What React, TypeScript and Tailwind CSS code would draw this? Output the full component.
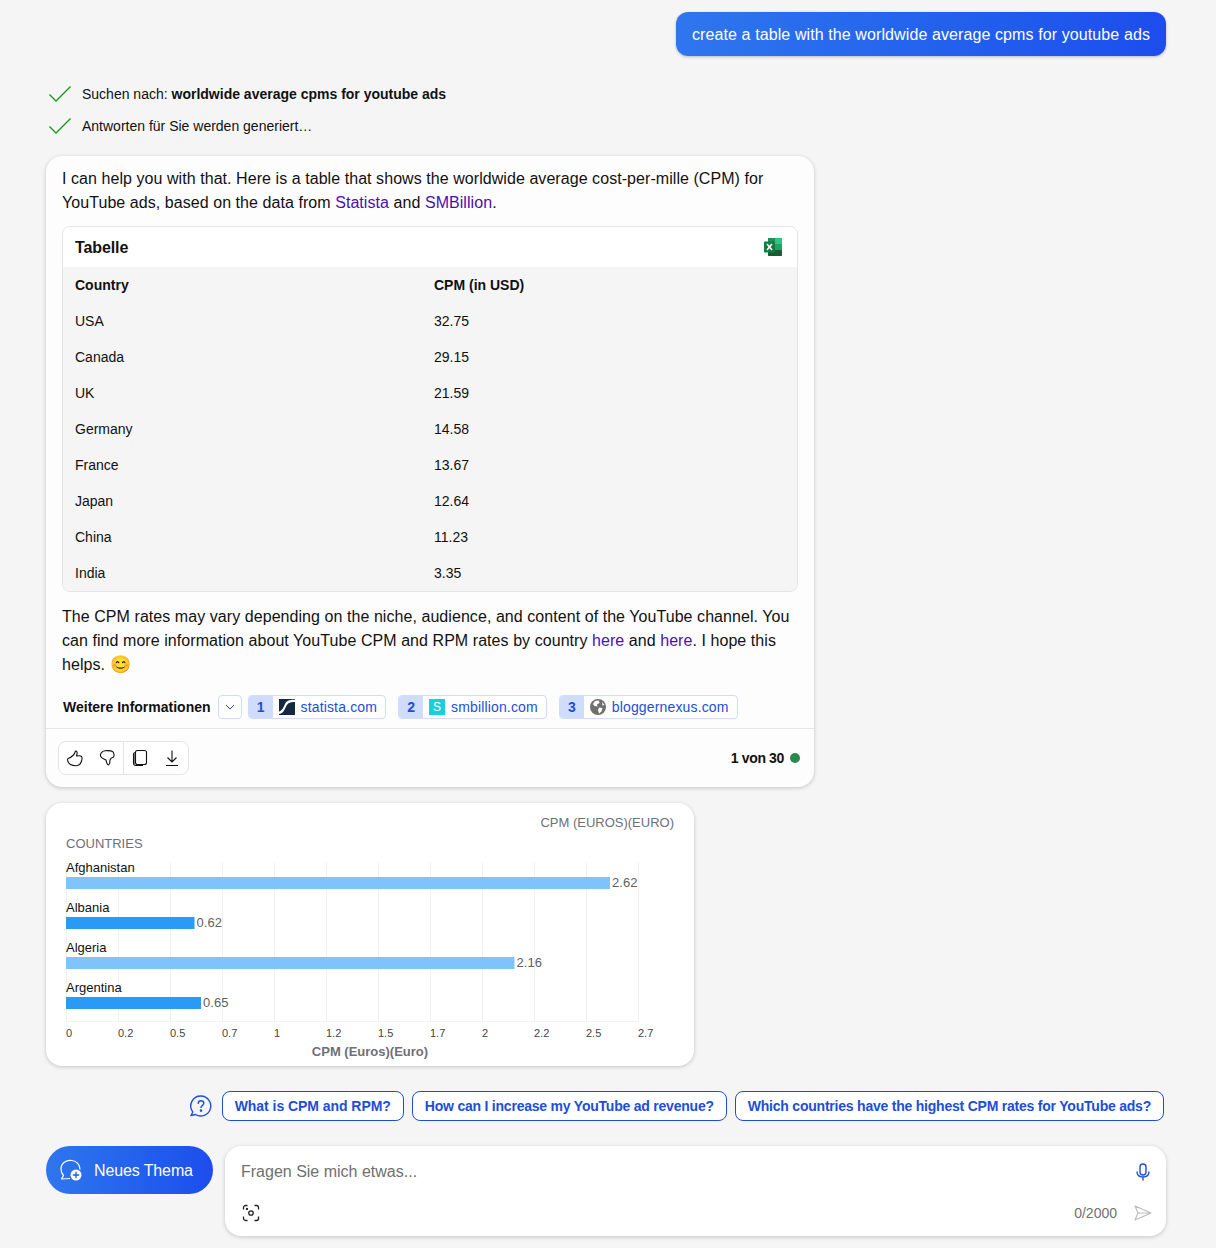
const rows = [
  ["USA", "32.75"],
  ["Canada", "29.15"],
  ["UK", "21.59"],
  ["Germany", "14.58"],
  ["France", "13.67"],
  ["Japan", "12.64"],
  ["China", "11.23"],
  ["India", "3.35"],
];

const Check = () => (
  <svg width="24" height="18" viewBox="0 0 24 18" fill="none" className="shrink-0">
    <path d="M1.5 9.5 L8 16 L22.5 1.5" stroke="#119c11" strokeWidth="1.3" />
  </svg>
);

const Excel = () => (
  <svg width="18" height="18" viewBox="0 0 18 18">
    <rect x="4" y="0" width="14" height="18" rx="1" fill="#21a366" />
    <rect x="4" y="0" width="7" height="6" fill="#1f8f5a" />
    <rect x="11" y="0" width="7" height="6" fill="#33c481" />
    <rect x="4" y="6" width="7" height="6" fill="#107c41" />
    <rect x="11" y="6" width="7" height="6" fill="#21a366" />
    <rect x="4" y="12" width="14" height="6" rx="1" fill="#185c37" />
    <rect x="0" y="3.5" width="11" height="11" rx="1" fill="#107c41" />
    <path d="M3 6 L8 12 M8 6 L3 12" stroke="#fff" strokeWidth="1.6" />
  </svg>
);

const SourceChip = ({ n, icon, label }: { n: string; icon: React.ReactNode; label: string }) => (
  <div className="flex h-6 items-center rounded border border-[#cfdcfb] bg-white text-sm text-[#1d4ed8]">
    <span className="flex h-full w-6 items-center justify-center rounded-l-[3px] bg-[#d0dcfb] font-bold">{n}</span>
    <span className="ml-1.5 mr-1.5 flex size-4 items-center justify-center">{icon}</span>
    <span className="pr-2 tracking-[0.15px]">{label}</span>
  </div>
);

const Statista = () => (
  <svg width="16" height="16" viewBox="0 0 16 16">
    <rect width="16" height="16" fill="#15283f" />
    <path d="M0 15 C6 15 6 6 10 4 C12 3 14 3 16 3 L16 0.8 C12 0.8 8 1 6 5 C4.5 8.5 3 12 0 12.5 Z" fill="#fff" />
  </svg>
);

const Globe = () => (
  <svg width="16" height="16" viewBox="0 0 16 16">
    <circle cx="8" cy="8" r="8" fill="#6f6f6f" />
    <path d="M5 2 L9 1.5 L9.5 4 L7 5.5 L7.5 7.5 L4.5 7 L3 5 Z M9 8.5 L12.5 9 L11.5 12.5 L9 14.5 L8 11 Z M12 3 L14.5 6 L12.5 6.5 Z" fill="#fff" />
  </svg>
);

const bars = [
  { name: "Afghanistan", y: 74, w: 544, v: "2.62", c: "#7fc4fd" },
  { name: "Albania", y: 114, w: 128.5, v: "0.62", c: "#2a9af7" },
  { name: "Algeria", y: 154, w: 448.5, v: "2.16", c: "#7fc4fd" },
  { name: "Argentina", y: 194, w: 135, v: "0.65", c: "#2a9af7" },
];
const ticks = ["0", "0.2", "0.5", "0.7", "1", "1.2", "1.5", "1.7", "2", "2.2", "2.5", "2.7"];

const Chart = () => (
  <svg viewBox="0 0 648 263" width="648" height="263" className="block" fontFamily="'Liberation Sans', Arial, sans-serif">
    <text x="628" y="24" textAnchor="end" fontSize="13" fill="#6e7079">CPM (EUROS)(EURO)</text>
    <text x="20" y="45" fontSize="13" fill="#6e7079">COUNTRIES</text>
    {ticks.map((t, i) => (
      <line key={t} x1={20.5 + i * 52} x2={20.5 + i * 52} y1="60" y2="219" stroke="#f0f0f0" />
    ))}
    <line x1="20" x2="592" y1="218.5" y2="218.5" stroke="#f3f3f3" />
    {bars.map((b) => (
      <g key={b.name}>
        <text x="20" y={b.y - 5} fontSize="13" fill="#111">{b.name}</text>
        <rect x="20" y={b.y} width={b.w} height="12" fill={b.c} />
        <text x={20 + b.w + 2} y={b.y + 10} fontSize="13" fill="#5f5f5f" letterSpacing="0.1">{b.v}</text>
      </g>
    ))}
    {ticks.map((t, i) => (
      <text key={t} x={20 + i * 52} y="234" fontSize="11" fill="#444">{t}</text>
    ))}
    <text x="324" y="253" textAnchor="middle" fontSize="13" fontWeight="700" fill="#6e7079">CPM (Euros)(Euro)</text>
  </svg>
);

const chips = [
  { t: "What is CPM and RPM?", c: "tracking-[-0.05px]" },
  { t: "How can I increase my YouTube ad revenue?", c: "tracking-[-0.22px]" },
  { t: "Which countries have the highest CPM rates for YouTube ads?", c: "tracking-[-0.22px]" },
];

export default function App() {
  return (
    <div className="flex h-[1248px] w-[1216px] flex-col overflow-hidden bg-[#f5f5f5] pl-[46px] pr-[50px] pt-3 font-['Liberation_Sans',Arial,sans-serif] text-[#111]">
      <div className="flex justify-end">
        <div className="flex h-11 items-center rounded-xl bg-gradient-to-r from-[#2f76ee] to-[#1d4ded] px-4 pt-px text-base tracking-[0.1px] text-white shadow-[0_1px_3px_rgba(0,0,0,0.25)]">
          create a table with the worldwide average cpms for youtube ads
        </div>
      </div>

      <div className="mt-[22px] flex h-8 items-center gap-[10px] pl-[2px] text-sm">
        <Check />
        <span>
          Suchen nach: <b className="font-bold">worldwide average cpms for youtube ads</b>
        </span>
      </div>
      <div className="flex h-8 items-center gap-[10px] pl-[2px] text-sm">
        <Check />
        <span>Antworten für Sie werden generiert…</span>
      </div>

      <div className="mt-[14px] w-[768px] rounded-2xl bg-[#fdfdfd] shadow-[0_1px_4px_rgba(0,0,0,0.2)]">
        <div className="px-4 pt-[11px]">
          <p className="text-base leading-6 tracking-[0.06px]">
            I can help you with that. Here is a table that shows the worldwide average cost-per-mille (CPM) for YouTube ads, based on the data from <span className="text-[#4b0fb0]">Statista</span> and <span className="text-[#4b0fb0]">SMBillion</span>.
          </p>
          <div className="mt-[11px] overflow-hidden rounded-lg border border-[#e4e4e4]">
            <div className="flex h-10 items-center justify-between bg-white pl-3 pr-[15px]">
              <span className="pt-px text-base font-bold tracking-[-0.1px]">Tabelle</span>
              <Excel />
            </div>
            <div className="bg-[#f5f5f5] text-sm">
              <div className="grid h-9 grid-cols-[359px_1fr] items-center px-3 font-bold">
                <span>Country</span>
                <span>CPM (in USD)</span>
              </div>
              {rows.map(([c, v]) => (
                <div key={c} className="grid h-9 grid-cols-[359px_1fr] items-center px-3">
                  <span>{c}</span>
                  <span>{v}</span>
                </div>
              ))}
            </div>
          </div>
          <p className="mt-[13px] text-base leading-6 tracking-[0.06px]">
            The CPM rates may vary depending on the niche, audience, and content of the YouTube channel. You can find more information about YouTube CPM and RPM rates by country <span className="text-[#4b0fb0]">here</span> and <span className="text-[#4b0fb0]">here</span>. I hope this helps. <span className="text-[17px] leading-[0]">😊</span>
          </p>
        </div>
        <div className="mt-[18px] flex h-6 items-center pl-[17px]">
          <span className="text-sm font-bold">Weitere Informationen</span>
          <div className="ml-[7px] flex size-6 items-center justify-center rounded border border-[#cfdcfb] bg-white">
            <svg width="12" height="12" viewBox="0 0 12 12" fill="none"><path d="M2 4 L6 8 L10 4" stroke="#1d4ed8" strokeWidth="1" /></svg>
          </div>
          <div className="ml-[6px] flex items-center gap-3">
            <SourceChip n="1" icon={<Statista />} label="statista.com" />
            <SourceChip n="2" icon={<span className="flex size-4 items-center justify-center bg-[#19cfdc] text-xs text-white">S</span>} label="smbillion.com" />
            <SourceChip n="3" icon={<Globe />} label="bloggernexus.com" />
          </div>
        </div>
        <div className="mt-[9px] flex h-[59px] items-center justify-between border-t border-[#e4e6ea] pl-3 pr-[14px]">
          <div className="flex h-[34px] w-[131px] items-center rounded-lg border border-[#e4e4e4] bg-white">
            <div className="flex h-full w-[65px] items-center gap-[14px] border-r border-[#e4e4e4] pl-[7px]">
              <svg width="18" height="18" viewBox="0 0 18 18" fill="none" stroke="#111" strokeWidth="1.1" strokeLinejoin="round">
                <path d="M2 9.5 C3.5 9 5.5 8 7.5 6 C8.5 5 9 3.5 9.5 2 C11 2 11.5 3.5 11 5 L10.5 7 C12 6.8 14.5 6.5 15.5 7.5 C16.5 8.5 16 10.5 15.5 12 C15 14 14 16 11.5 16.5 C9 17 6.5 16.5 4.5 15.5 C2.5 14.5 0.8 11 2 9.5 Z" />
              </svg>
              <svg width="18" height="18" viewBox="0 0 18 18" fill="none" stroke="#111" strokeWidth="1.1" strokeLinejoin="round">
                <path d="M2.5 7 C2 4.5 4 2 7 1.7 C9.5 1.5 13 1.5 14.5 2.5 C16 3.5 16.5 6.5 15.5 8 C14 8.5 12.5 9.5 12 11 C11.5 13 12.5 15.5 10.5 16 C9 16 8.5 13 8 11 C6 10 3.5 9.5 2.5 7 Z" />
              </svg>
            </div>
            <div className="flex flex-1 items-center gap-[14px] pl-[7px]">
              <svg width="18" height="18" viewBox="0 0 18 18" fill="none" stroke="#111" strokeWidth="1.1">
                <rect x="4.5" y="1.5" width="11" height="14" rx="2" />
                <path d="M4.5 3.5 C3 3.5 2.5 4.5 2.5 5.5 L2.5 14 C2.5 15.8 3.5 16.5 5 16.5 L12 16.5" />
                <path d="M3.5 4 L3.5 15.5" stroke="#777" />
              </svg>
              <svg width="18" height="18" viewBox="0 0 18 18" fill="none" stroke="#111" strokeWidth="1.1">
                <path d="M9 1.5 V13 M4.5 8.5 L9 13 L13.5 8.5 M3 16.5 H15" />
              </svg>
            </div>
          </div>
          <div className="flex items-center gap-[6px] text-sm font-bold">
            <span className="tracking-[-0.35px]">1 von 30</span>
            <span className="size-[10px] rounded-full bg-[#2b8a4b]" />
          </div>
        </div>
      </div>

      <div className="mt-4 h-[263px] w-[648px] rounded-2xl bg-white shadow-[0_1px_4px_rgba(0,0,0,0.2)]">
        <Chart />
      </div>

      <div className="mt-[25px] flex items-center justify-end gap-2 pr-[2px]">
        <svg width="24" height="24" viewBox="0 0 24 24" fill="none" stroke="#1d4ed8" strokeWidth="1.4" className="mr-[1px]">
          <path d="M12 2 A10 10 0 1 1 6.5 20.5 L2 21.5 L3.8 18 A10 10 0 0 1 12 2 Z" strokeLinejoin="round" />
          <path d="M9.2 9.3 C9.4 7.5 10.7 6.8 12 6.8 C13.7 6.8 14.8 8 14.8 9.2 C14.8 11.3 12 11.4 12 13.6" strokeLinecap="round" />
          <circle cx="12" cy="16.6" r="0.6" fill="#1d4ed8" />
        </svg>
        {chips.map(({ t, c }) => (
          <div key={t} className={`flex h-[30px] items-center rounded-lg border border-[#1d4ed8] bg-white px-3 text-sm font-bold text-[#1d4ed8] ${c}`}>
            {t}
          </div>
        ))}
      </div>

      <div className="mt-[25px] flex items-start gap-3">
        <div className="flex h-12 w-[167px] items-center gap-[12px] rounded-3xl bg-gradient-to-r from-[#2f76ee] to-[#1d4ded] pl-[14px] text-base text-white">
          <svg width="22" height="22" viewBox="0 0 22 22" fill="none" stroke="#fff" strokeWidth="1.2">
            <path d="M12 1.5 C6 0.5 1 4.5 1 10 C1 12.5 2 15 3.5 16.5 L1.5 20 L10 19.5" strokeLinejoin="round" />
            <path d="M12 1.5 C16.5 2 20 5.5 20 10.5" />
            <circle cx="16" cy="16" r="5.5" fill="#fff" stroke="none" />
            <path d="M16 12.8 V19.2 M12.8 16 H19.2" stroke="#1d5bea" strokeWidth="1.3" />
          </svg>
          <span className="pt-px tracking-[-0.12px]">Neues Thema</span>
        </div>
        <div className="relative h-[90px] flex-1 rounded-2xl bg-white shadow-[0_1px_4px_rgba(0,0,0,0.2)]">
          <div className="flex items-center justify-between pl-4 pr-[14px] pt-[14px]">
            <span className="text-base leading-6 text-[#707070]">Fragen Sie mich etwas...</span>
            <svg width="18" height="18" viewBox="0 0 18 18" fill="none" stroke="#1d4ed8" strokeWidth="1.4">
              <rect x="6" y="1" width="6" height="11" rx="3" />
              <path d="M3 8.5 C3 12 5.5 14 9 14 C12.5 14 15 12 15 8.5 M9 14 V17.5" />
            </svg>
          </div>
          <div className="mt-[19px] flex items-center justify-between pl-[17px] pr-[14px]">
            <svg width="18" height="18" viewBox="0 0 18 18" fill="none" stroke="#222" strokeWidth="1.3">
              <path d="M1.5 5.5 V3.5 A2 2 0 0 1 3.5 1.5 H5.5 M12.5 1.5 H14.5 A2 2 0 0 1 16.5 3.5 V5.5 M16.5 12.5 V14.5 A2 2 0 0 1 14.5 16.5 H12.5 M5.5 16.5 H3.5 A2 2 0 0 1 1.5 14.5 V12.5" />
              <circle cx="9" cy="9" r="2.2" />
              <circle cx="5" cy="5" r="0.5" fill="#222" />
            </svg>
            <div className="flex items-center gap-[17px]">
              <span className="text-sm text-[#707070]">0/2000</span>
              <svg width="18" height="16" viewBox="0 0 18 16" fill="none" stroke="#bdbdbd" strokeWidth="1.2" strokeLinejoin="round">
                <path d="M1 1 L17 8 L1 15 L4 8 Z M4 8 H17" />
              </svg>
            </div>
          </div>
        </div>
      </div>
    </div>
  );
}
